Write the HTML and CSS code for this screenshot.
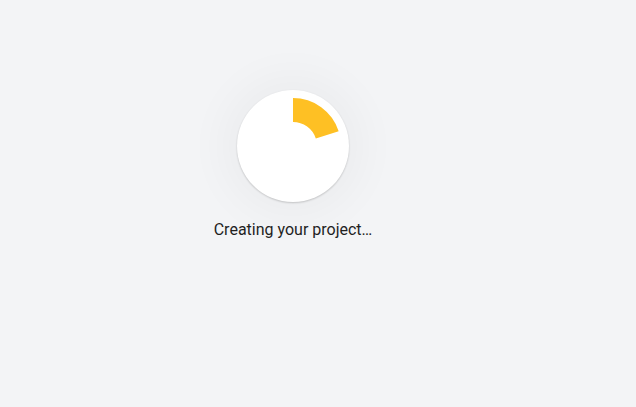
FILE: index.html
```html
<!DOCTYPE html>
<html lang="en">
<head>
    <meta charset="UTF-8">
    <meta name="viewport" content="width=device-width, initial-scale=1.0">
    <title>Creating project</title>
    <link rel="stylesheet" href="styles.css">
</head>
<body>
    <div class="loader">
        <div class="spinner">
            <svg width="112" height="112" viewBox="0 0 112 112">
                <!-- one fifth of a ring, from 12 o'clock clockwise -->
                <path d="M56 8 A48 48 0 0 1 101.65 41.17 L78.83 48.58 A24 24 0 0 0 56 32 Z" fill="#fec024"/>
            </svg>
        </div>
        <div class="loader-text">Creating your project…</div>
    </div>
</body>
</html>
```

FILE: styles.css
```css
* {
    margin: 0;
    padding: 0;
    box-sizing: border-box;
}

body {
    font-family: Roboto, 'Liberation Sans', sans-serif;
    background: #f3f4f6;
    min-height: 100vh;
}

.loader {
    width: 586px;
    padding-top: 90px;
    display: flex;
    flex-direction: column;
    align-items: center;
}

.spinner {
    width: 112px;
    height: 112px;
    border-radius: 50%;
    background: white;
    box-shadow: 0 0 44px 14px rgba(0,0,0,0.035), 0 1px 2px rgba(0,0,0,0.18);
}

.spinner svg {
    display: block;
}

.loader-text {
    margin-top: 16px;
    font-size: 16px;
    line-height: 24px;
    color: #1f1f1f;
}
```
